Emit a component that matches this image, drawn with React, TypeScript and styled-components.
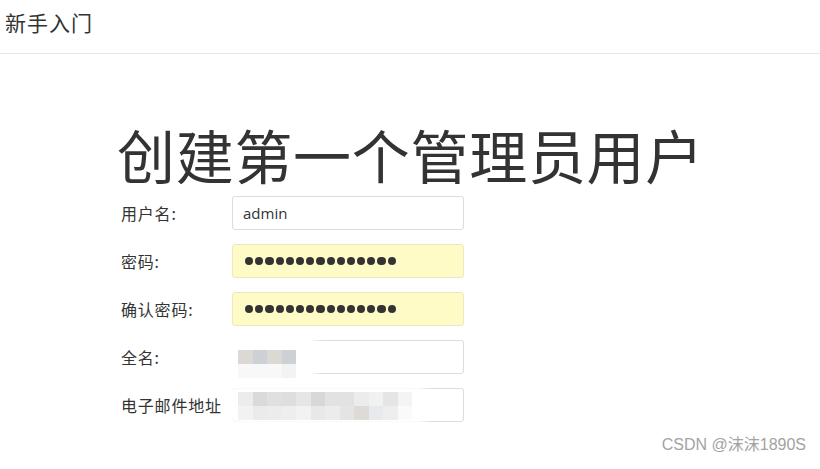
import React from "react";
import styled, { createGlobalStyle } from "styled-components";

const Global = createGlobalStyle`
  html, body { margin: 0; padding: 0; background: #fff; }
  body { font-family: "Noto Sans CJK SC", "Liberation Sans", sans-serif; color: #333; }
`;

const Page = styled.div`
  position: relative;
  width: 820px;
  height: 469px;
  overflow: hidden;
  background: #fff;
`;

const Header = styled.header`
  box-sizing: border-box;
  height: 54px;
  border-bottom: 1px solid #e6e6e6;
  display: flex;
  align-items: center;
  padding-left: 5px;
  padding-bottom: 8px;
`;

const HeaderTitle = styled.div`
  font-size: 21px;
  letter-spacing: 1px;
  color: #333;
  line-height: 1;
`;

const Main = styled.main`
  padding-left: 117px;
  padding-top: 68px;
`;

const Title = styled.h1`
  margin: 0;
  font-size: 58px;
  font-weight: 400;
  line-height: 64px;
  color: #333;
  letter-spacing: 0.7px;
`;

const Form = styled.div`
  display: flex;
  flex-direction: column;
  gap: 14px;
  margin-top: 10px;
`;

const Row = styled.div`
  display: grid;
  grid-template-columns: 115px 232px;
  align-items: center;
  height: 34px;
`;

const Label = styled.div`
  padding-left: 4px;
  font-size: 16px;
  letter-spacing: 0.8px;
  color: #333;
  position: relative;
  z-index: 2;
  white-space: nowrap;
`;

const Field = styled.div<{ $filled?: boolean }>`
  position: relative;
  box-sizing: border-box;
  height: 34px;
  border: 1px solid ${(p) => (p.$filled ? "#ebe8c4" : "#dcdcdc")};
  border-radius: 3px;
  background: ${(p) => (p.$filled ? "#fffbc7" : "#fff")};
  display: flex;
  align-items: center;
  padding-left: 10px;
  font-size: 15px;
  font-family: "Open Sans", "Liberation Sans", sans-serif;
  color: #333;
`;

const Dots = styled.div`
  display: flex;
  gap: 2px;
  padding-left: 2px;
`;

const Dot = styled.span`
  width: 8.2px;
  height: 8.2px;
  border-radius: 50%;
  background: #333;
`;

const Smudge = styled.div<{ $w: number; $h: number; $l: number; $t: number }>`
  position: absolute;
  left: ${(p) => p.$l}px;
  top: ${(p) => p.$t}px;
  width: ${(p) => p.$w}px;
  height: ${(p) => p.$h}px;
  background: #fff;
  border-radius: 40px;
  filter: blur(3px);
  z-index: 1;
`;

const Mosaic = styled.div<{ $cols: number; $l: number; $t: number }>`
  position: absolute;
  left: ${(p) => p.$l}px;
  top: ${(p) => p.$t}px;
  display: grid;
  grid-template-columns: repeat(${(p) => p.$cols}, 14.5px);
  grid-auto-rows: 14px;
  z-index: 2;
`;

const Cell = styled.span``;

const Watermark = styled.div`
  position: absolute;
  right: 14px;
  bottom: 14px;
  font-family: "Liberation Sans", "Noto Sans CJK SC", sans-serif;
  font-size: 16px;
  color: #a3a3a3;
`;

const nameCells = [
  "#dcd8d4", "#cdd1d6", "#dcd8d4", "#cdd1d6",
  "#f8f8f8", "#f8f8f8", "#f8f8f8", "#f3f3f3",
];

const emailCells = [
  "#ececec", "#dcdad8", "#e0e0e0", "#dcdee0", "#e6e6e6", "#d8d8d8", "#e4e2e0", "#e2e2e2", "#ececec", "#f0f2f0", "#e4e6e6", "#f4f4f4",
  "#f2f2f2", "#ebebeb", "#ececec", "#eeeeee", "#f2f2f2", "#e8e8e8", "#ececec", "#e2e4e6", "#dedad6", "#e6eaec", "#eeeeee", "#fafafa",
];

export default function App() {
  return (
    <Page>
      <Global />
      <Header>
        <HeaderTitle>新手入门</HeaderTitle>
      </Header>
      <Main>
        <Title>创建第一个管理员用户</Title>
        <Form>
          <Row>
            <Label>用户名:</Label>
            <Field>admin</Field>
          </Row>
          <Row>
            <Label>密码:</Label>
            <Field $filled>
              <Dots>
                {Array.from({ length: 15 }).map((_, i) => (
                  <Dot key={i} />
                ))}
              </Dots>
            </Field>
          </Row>
          <Row>
            <Label>确认密码:</Label>
            <Field $filled>
              <Dots>
                {Array.from({ length: 15 }).map((_, i) => (
                  <Dot key={i} />
                ))}
              </Dots>
            </Field>
          </Row>
          <Row>
            <Label>全名:</Label>
            <Field>
              <Smudge $l={-14} $t={-8} $w={104} $h={48} />
              <Mosaic $cols={4} $l={5} $t={9}>
                {nameCells.map((c, i) => (
                  <Cell key={i} style={{ background: c }} />
                ))}
              </Mosaic>
            </Field>
          </Row>
          <Row>
            <Label>电子邮件地址</Label>
            <Field>
              <Smudge $l={-12} $t={-4} $w={212} $h={40} />
              <Mosaic $cols={12} $l={5} $t={3}>
                {emailCells.map((c, i) => (
                  <Cell key={i} style={{ background: c }} />
                ))}
              </Mosaic>
            </Field>
          </Row>
        </Form>
      </Main>
      <Watermark>CSDN @沫沫1890S</Watermark>
    </Page>
  );
}
